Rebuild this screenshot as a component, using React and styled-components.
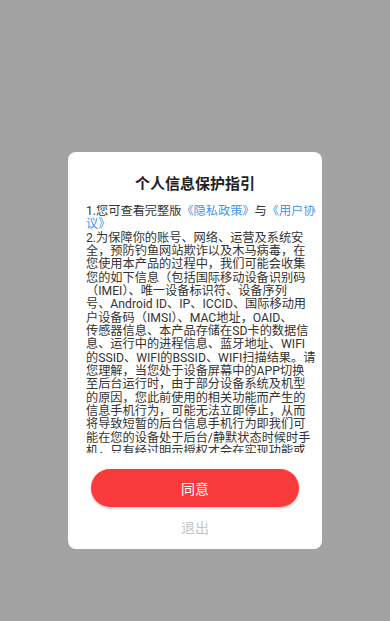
import styled, { createGlobalStyle } from "styled-components";

const GlobalStyle = createGlobalStyle`
  html, body {
    margin: 0;
    padding: 0;
    background: #a3a3a3;
  }
  body {
    font-family: Roboto, "Noto Sans CJK SC", sans-serif;
  }
`;

const lines = [
  "2.为保障你的账号、网络、运营及系统安",
  "全，预防钓鱼网站欺诈以及木马病毒，在",
  "您使用本产品的过程中，我们可能会收集",
  "您的如下信息（包括国际移动设备识别码",
  "（IMEI）、唯一设备标识符、设备序列",
  "号、Android ID、IP、ICCID、国际移动用",
  "户设备码（IMSI）、MAC地址，OAID、",
  "传感器信息、本产品存储在SD卡的数据信",
  "息、运行中的进程信息、蓝牙地址、WIFI",
  "的SSID、WIFI的BSSID、WIFI扫描结果。请",
  "您理解，当您处于设备屏幕中的APP切换",
  "至后台运行时，由于部分设备系统及机型",
  "的原因，您此前使用的相关功能而产生的",
  "信息手机行为，可能无法立即停止，从而",
  "将导致短暂的后台信息手机行为即我们可",
  "能在您的设备处于后台/静默状态时候时手",
  "机，只有经过明示授权才会在实现功能或",
  "服务时使用，不会用于其他目的。",
];

const App = () => {
  return (
    <Page>
      <GlobalStyle />
      <Dialog>
        <Title>个人信息保护指引</Title>
        <Body>
          <Line>
            1.您可查看完整版<Link>《隐私政策》</Link>与<Link>《用户协</Link>
          </Line>
          <Line>
            <Link>议》</Link>
          </Line>
          {lines.map((line, i) => (
            <Line key={i}>{line}</Line>
          ))}
        </Body>
        <AgreeButton>同意</AgreeButton>
        <ExitButton>退出</ExitButton>
      </Dialog>
    </Page>
  );
};

const Page = styled.div`
  width: 390px;
  height: 621px;
  box-sizing: border-box;
  padding-top: 152px;
  display: flex;
  flex-direction: column;
  align-items: center;
  background: #a3a3a3;
`;

const Dialog = styled.div`
  width: 254px;
  height: 397px;
  box-sizing: border-box;
  background: #fff;
  border-radius: 8px;
  padding: 22px 0 11px;
  display: flex;
  flex-direction: column;
  align-items: center;
`;

const Title = styled.h2`
  margin: 0;
  font-size: 15px;
  line-height: 20px;
  font-weight: 700;
  color: #222;
`;

const Body = styled.div`
  align-self: stretch;
  margin-top: 11px;
  padding-left: 18px;
  height: 248px;
  overflow: hidden;
  font-size: 12.2px;
  line-height: 13.33px;
  color: #333;
  white-space: nowrap;
`;

const Line = styled.div``;

const Link = styled.span`
  color: #3f97e6;
`;

const AgreeButton = styled.button`
  margin-top: 16px;
  width: 208px;
  height: 38px;
  border: none;
  border-radius: 19px;
  background: #f83a3a;
  color: #fff;
  font-family: inherit;
  font-size: 14px;
  box-shadow: 0 1px 3px rgba(248, 58, 58, 0.35);
`;

const ExitButton = styled.div`
  margin-top: 11px;
  font-size: 14px;
  line-height: 20px;
  color: #c4c4c4;
`;

export default App;
